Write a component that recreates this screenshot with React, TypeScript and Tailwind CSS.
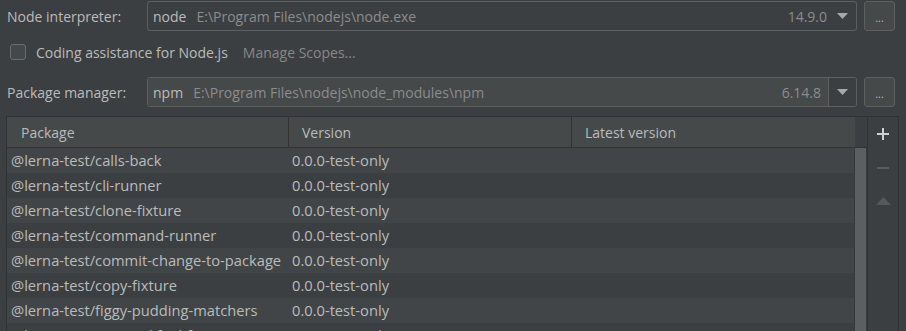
const packages = [
  "@lerna-test/calls-back",
  "@lerna-test/cli-runner",
  "@lerna-test/clone-fixture",
  "@lerna-test/command-runner",
  "@lerna-test/commit-change-to-package",
  "@lerna-test/copy-fixture",
  "@lerna-test/figgy-pudding-matchers",
  "@lerna-test/get-modified-fixture",
];

const Arrow = () => (
  <svg width="11" height="6" viewBox="0 0 11 6" className="shrink-0">
    <path d="M0 0h11L5.5 6z" fill="#a8a8a8" />
  </svg>
);

const DotsButton = () => (
  <button className="flex h-[30px] w-[31px] shrink-0 items-end justify-center rounded-[3px] border border-[#5e6060] bg-[#45494a] pb-[7px] text-[11px] leading-none text-[#bbbbbb]">
    ...
  </button>
);

const App = () => {
  return (
    <div
      className="h-[331px] w-[906px] overflow-hidden bg-[#3c3f41] text-[14px] text-[#bbbbbb]"
      style={{ fontFamily: '"Open Sans", "Noto Sans", sans-serif' }}
    >
      <div className="mt-[1px] flex h-[30px] items-center pl-[7px] pr-[11px]">
        <span className="w-[140px] shrink-0">Node interpreter:</span>
        <div className="flex h-full flex-1 items-center rounded-[3px] border border-[#5e6060] bg-[#3c3f41] pl-[5px] pr-[8px]">
          <span>node</span>
          <span className="ml-[10px] text-[#8c8c8c]">E:\Program Files\nodejs\node.exe</span>
          <span className="mr-[10px] ml-auto text-[#8c8c8c]">14.9.0</span>
          <Arrow />
        </div>
        <div className="ml-[7px]">
          <DotsButton />
        </div>
      </div>

      <div className="flex h-[46px] items-center pb-[4px] pl-[10px]">
        <div className="h-[16px] w-[16px] rounded-[3px] border border-[#6b6b6b] bg-[#43494a]" />
        <span className="ml-[10px]">Coding assistance for Node.js</span>
        <span className="ml-[15px] text-[#888888]">Manage Scopes...</span>
      </div>

      <div className="flex h-[30px] items-center pl-[7px] pr-[11px]">
        <span className="w-[140px] shrink-0">Package manager:</span>
        <div className="flex h-full flex-1 items-stretch overflow-hidden rounded-[3px] border border-[#5e6060]">
          <div className="flex flex-1 items-center bg-[#45494a] pl-[5px] pr-[7px]">
            <span>npm</span>
            <span className="ml-[10px] text-[#8c8c8c]">E:\Program Files\nodejs\node_modules\npm</span>
            <span className="ml-auto text-[#8c8c8c]">6.14.8</span>
          </div>
          <div className="flex w-[28px] items-center justify-center border-l border-[#5e6060] bg-[#3c3f41]">
            <Arrow />
          </div>
        </div>
        <div className="ml-[7px]">
          <DotsButton />
        </div>
      </div>

      <div className="mt-[9px] ml-[6px] flex h-[300px] w-[893px] border border-[#2f3133]">
        <div className="flex w-[860px] flex-col">
          <div className="flex h-[31px] border-b border-[#323232]">
            <div className="flex w-[848px] bg-[#45494a]">
              <div className="flex w-[282px] items-center border-r border-[#323232] pl-[14px]">Package</div>
              <div className="flex w-[283px] items-center border-r border-[#323232] pl-[13px]">Version</div>
              <div className="flex flex-1 items-center pl-[13px]">Latest version</div>
            </div>
            <div className="flex-1 bg-[#3c3f41]" />
          </div>
          <div className="flex flex-1">
            <div className="w-[847px] text-[14.7px]">
              {packages.map((name, i) => (
                <div
                  key={name}
                  className={`flex h-[25px] items-center ${i % 2 === 0 ? "bg-[#414547]" : "bg-[#3c3f41]"}`}
                >
                  <span className="w-[282px] truncate pl-[4px]">{name}</span>
                  <span className="pl-[3px]">0.0.0-test-only</span>
                </div>
              ))}
            </div>
            <div className="flex w-[13px] border-x border-[#37393b] bg-[#3c3f41]">
              <div className="w-full bg-[#5b5f61]" />
            </div>
          </div>
        </div>
        <div className="flex flex-1 flex-col items-center border-l border-[#323232] pt-[11px]">
          <svg width="12" height="12" viewBox="0 0 12 12">
            <path d="M6 0v12M0 6h12" stroke="#cfcfcf" strokeWidth="2" />
          </svg>
          <svg width="12" height="2" viewBox="0 0 12 2" className="mt-[27px]">
            <path d="M0 1h12" stroke="#5a5d60" strokeWidth="2" />
          </svg>
          <svg width="15" height="8" viewBox="0 0 15 8" className="mt-[28px]">
            <path d="M0 8L7.5 0L15 8z" fill="#55595b" />
          </svg>
        </div>
      </div>
    </div>
  );
};

export default App;
